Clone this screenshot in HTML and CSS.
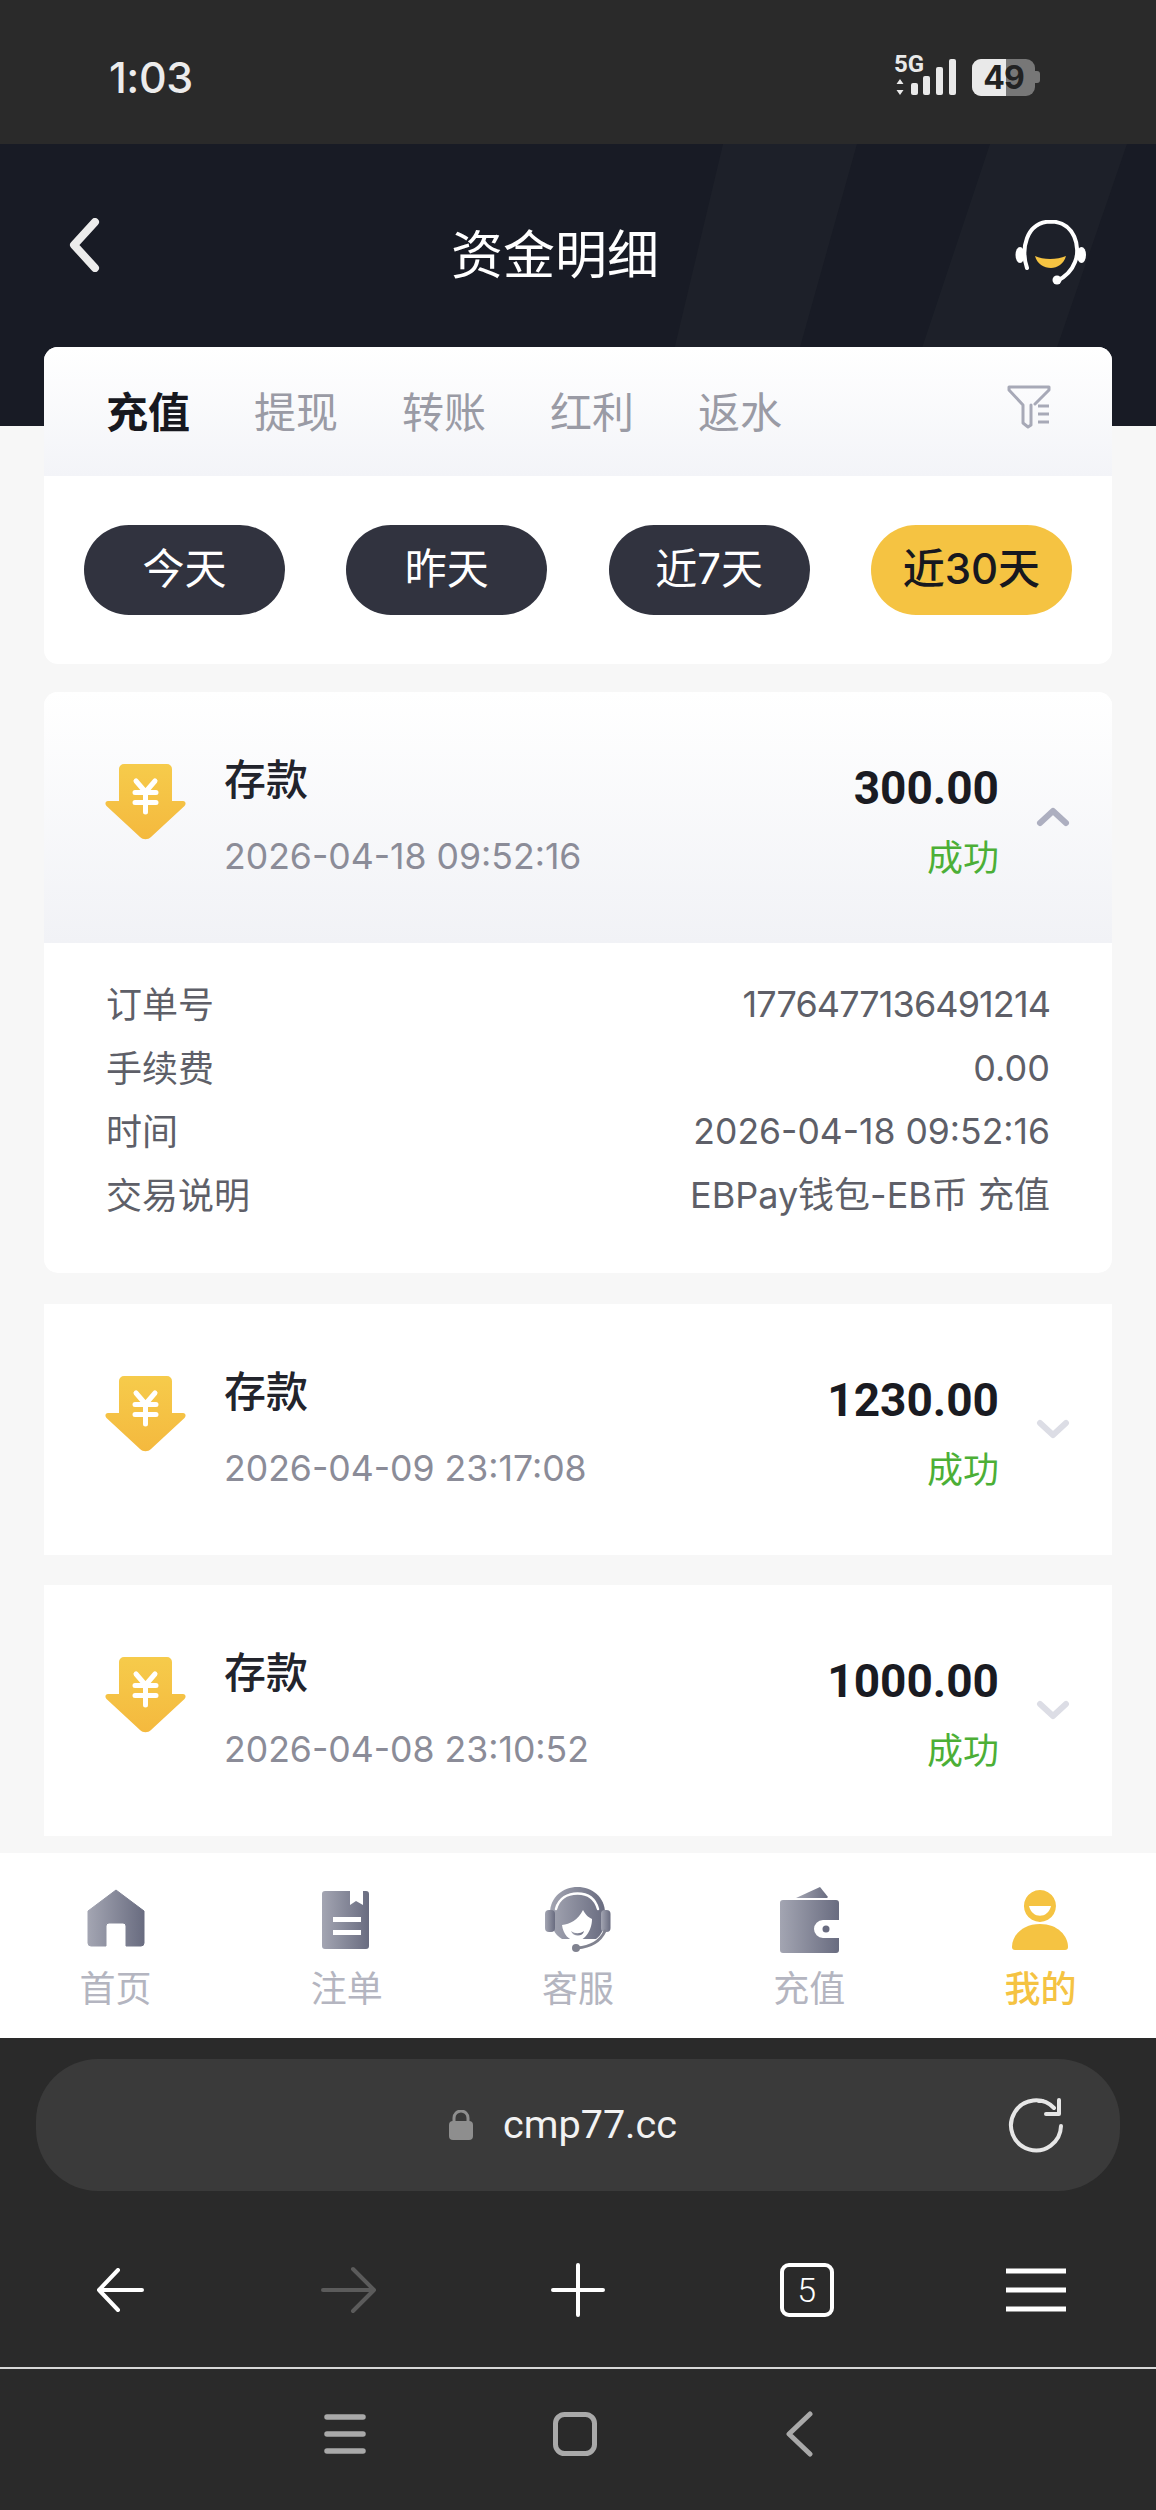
FILE: index.html
```html
<!DOCTYPE html>
<html lang="zh">
<head>
<meta charset="utf-8">
<title>资金明细</title>
<link rel="stylesheet" href="styles.css">
</head>
<body>
<div class="screen">
  <svg width="0" height="0" class="defs">
    <defs>
      <linearGradient id="nav-grey" x1="0" y1="0" x2="1" y2="0">
        <stop offset="0" stop-color="#a3a5b2"/>
        <stop offset="1" stop-color="#696c80"/>
      </linearGradient>
      <linearGradient id="arrow-gold" x1="0" y1="0" x2="0" y2="1">
        <stop offset="0" stop-color="#f6cb4b"/>
        <stop offset="1" stop-color="#f4b93e"/>
      </linearGradient>
      <symbol id="deposit" viewBox="0 0 81 76">
        <path d="M14 5a5 5 0 0 1 5-5h43a5 5 0 0 1 5 5v32h11c2.500 0 3.500 3 1.500 5L46 73c-3 3-8 3-11 0L1.500 42C-.5 40 .5 37 3 37h11z" fill="url(#arrow-gold)"/>
        <path d="M31 17l9.500 11L50 17M30 28.500h21M30 38.500h21M40.500 28v20" fill="none" stroke="#fff" stroke-width="5" stroke-linecap="round" stroke-linejoin="round"/>
      </symbol>
    </defs>
  </svg>

  <div class="status">
    <span class="clock">1:03</span>
    <div class="status-right">
      <svg class="signal" width="64" height="38" viewBox="0 0 64 38">
        <text x="0" y="14" class="fiveg">5G</text>
        <path d="M6 21l3.500 5h-7zM6 37l3.500-5h-7z" fill="#e9e9e9"/>
        <rect x="17" y="25" width="7" height="12" rx="2" fill="#e9e9e9"/>
        <rect x="29" y="18" width="7" height="19" rx="2" fill="#e9e9e9"/>
        <rect x="42" y="9" width="7" height="28" rx="2" fill="#e9e9e9"/>
        <rect x="55" y="1" width="7" height="36" rx="2" fill="#e9e9e9"/>
      </svg>
      <div class="battery"><div class="battery-fill"></div><span class="battery-num">49</span><div class="battery-nub"></div></div>
    </div>
  </div>

  <header class="header">
    <svg class="streaks" width="1156" height="282" viewBox="0 0 1156 282">
      <path d="M723 0h134L778 282H656zM990 0h137l-97 282H896z" fill="#1d2029"/>
    </svg>
    <svg class="back" width="34" height="54" viewBox="0 0 34 54"><path d="M28 4L7 27l21 23" fill="none" stroke="#ececec" stroke-width="8" stroke-linecap="round" stroke-linejoin="round"/></svg>
    <h1 class="title">资金明细</h1>
    <svg class="support" width="72" height="66" viewBox="0 0 72 66">
      <path d="M12 48C6 30 10 2 36 1.500 60 2 66 28 60 42 57 50 50 57 42 61" fill="none" stroke="#fff" stroke-width="4" stroke-linecap="round"/>
      <ellipse cx="5" cy="35" rx="4.500" ry="8" fill="#fff"/>
      <ellipse cx="66.500" cy="35" rx="4.500" ry="8" fill="#fff"/>
      <circle cx="42" cy="60" r="4.500" fill="#fff"/>
      <path d="M20 36c8 4 22 4 31 0-2 8-9 12-15 12-7 0-14-4-16-12z" fill="#f5c342"/>
    </svg>
  </header>

  <main class="content">
    <section class="filter-card">
      <div class="tabs">
        <span class="tab tab-on">充值</span>
        <span class="tab">提现</span>
        <span class="tab">转账</span>
        <span class="tab">红利</span>
        <span class="tab">返水</span>
        <svg class="filter-icon" width="46" height="44" viewBox="0 0 46 44">
          <path d="M3 2h40v3L29 19M3 2v3l14 15v18l5 4 3-2V20" fill="none" stroke="#a7a9b7" stroke-width="3" stroke-linejoin="round" stroke-linecap="round"/>
          <path d="M32 21h11M32 29h11M32 37h11" stroke="#a7a9b7" stroke-width="3"/>
        </svg>
      </div>
      <div class="pills">
        <span class="pill">今天</span>
        <span class="pill">昨天</span>
        <span class="pill">近7天</span>
        <span class="pill pill-on">近30天</span>
      </div>
    </section>

    <section class="record record-open">
      <div class="record-head">
        <svg class="arrow" width="81" height="76"><use href="#deposit"/></svg>
        <div class="record-main">
          <div class="record-title">存款</div>
          <div class="record-date">2026-04-18 09:52:16</div>
        </div>
        <div class="record-side">
          <div class="record-amount">300.00</div>
          <div class="record-state">成功</div>
        </div>
        <svg class="chev" width="34" height="20" viewBox="0 0 34 20"><path d="M4 16L17 4l13 12" fill="none" stroke="#adafc0" stroke-width="6" stroke-linecap="round" stroke-linejoin="round"/></svg>
      </div>
      <div class="details">
        <div class="detail"><span>订单号</span><span class="detail-value detail-id">1776477136491214</span></div>
        <div class="detail"><span>手续费</span><span class="detail-value">0.00</span></div>
        <div class="detail"><span>时间</span><span class="detail-value detail-time">2026-04-18 09:52:16</span></div>
        <div class="detail"><span>交易说明</span><span class="detail-value">EBPay钱包-EB币 充值</span></div>
      </div>
    </section>

    <section class="record">
      <div class="record-head">
        <svg class="arrow" width="81" height="76"><use href="#deposit"/></svg>
        <div class="record-main">
          <div class="record-title">存款</div>
          <div class="record-date">2026-04-09 23:17:08</div>
        </div>
        <div class="record-side">
          <div class="record-amount">1230.00</div>
          <div class="record-state">成功</div>
        </div>
        <svg class="chev" width="34" height="20" viewBox="0 0 34 20"><path d="M4 4l13 12L30 4" fill="none" stroke="#dcdde5" stroke-width="6" stroke-linecap="round" stroke-linejoin="round"/></svg>
      </div>
    </section>

    <section class="record">
      <div class="record-head">
        <svg class="arrow" width="81" height="76"><use href="#deposit"/></svg>
        <div class="record-main">
          <div class="record-title">存款</div>
          <div class="record-date">2026-04-08 23:10:52</div>
        </div>
        <div class="record-side">
          <div class="record-amount">1000.00</div>
          <div class="record-state">成功</div>
        </div>
        <svg class="chev" width="34" height="20" viewBox="0 0 34 20"><path d="M4 4l13 12L30 4" fill="none" stroke="#dcdde5" stroke-width="6" stroke-linecap="round" stroke-linejoin="round"/></svg>
      </div>
    </section>
  </main>

  <nav class="tabbar">
    <div class="nav-item">
      <svg class="nav-icon" width="66" height="66" viewBox="0 0 66 66">
        <path d="M33 3L61 24v32a3 3 0 0 1-3 3H43V39a3 3 0 0 0-3-3H26a3 3 0 0 0-3 3v20H8a3 3 0 0 1-3-3V24z" fill="url(#nav-grey)" stroke="url(#nav-grey)" stroke-width="1" stroke-linejoin="round"/>
      </svg>
      <span>首页</span>
    </div>
    <div class="nav-item">
      <svg class="nav-icon" width="66" height="66" viewBox="0 0 66 66">
        <path fill-rule="evenodd" d="M11 4h25v14l6-4 7 4V4h3a3 3 0 0 1 3 3v52a3 3 0 0 1-3 3H11a3 3 0 0 1-3-3V7a3 3 0 0 1 3-3zM19 30v5h28v-5zM19 43v5h28v-5z" fill="url(#nav-grey)"/>
      </svg>
      <span>注单</span>
    </div>
    <div class="nav-item">
      <svg class="nav-icon" width="66" height="66" viewBox="0 0 66 66">
        <path d="M5 26C5 10 18 0 32.500 0S60 10 60 26c0 14-3 22-9 26H17C10 48 5 40 5 26z" fill="url(#nav-grey)"/>
        <rect x="0" y="23" width="10" height="22" rx="4" fill="url(#nav-grey)"/>
        <rect x="56" y="23" width="9.500" height="22" rx="4" fill="url(#nav-grey)"/>
        <path d="M11 22C14 11 23 6.500 32.500 6.500S50 11 53 22" fill="none" stroke="#fff" stroke-width="2.500" stroke-linecap="round"/>
        <path d="M17 38c8-1 16-5 21-15 3 6 7 8 9 9 0 12-8 22-15 22-8 0-14-7-15-16z" fill="#fff"/>
        <path d="M26 44c4 3 9 3 13 0-1 6-11 6-13 0z" fill="url(#nav-grey)"/>
        <path d="M10 47l6 8h40l8-10v21H0V47z" fill="#fff"/>
        <path d="M60 44C55 55 44 60 32 61" fill="none" stroke="#80828f" stroke-width="3" stroke-linecap="round"/>
        <circle cx="31" cy="61" r="4" fill="#80828f"/>
      </svg>
      <span>客服</span>
    </div>
    <div class="nav-item">
      <svg class="nav-icon" width="66" height="66" viewBox="0 0 66 66">
        <path d="M20 11L44 0l8 10-1 1z" fill="url(#nav-grey)"/>
        <path fill-rule="evenodd" d="M4 16a3 3 0 0 1 3-3h53a3 3 0 0 1 3 3v17H47a9 9 0 0 0 0 18h16v12a3 3 0 0 1-3 3H7a3 3 0 0 1-3-3z" fill="url(#nav-grey)"/>
        <circle cx="50" cy="42" r="3.500" fill="#696c80"/>
      </svg>
      <span>充值</span>
    </div>
    <div class="nav-item nav-on">
      <svg class="nav-icon" width="66" height="66" viewBox="0 0 66 66">
        <path fill-rule="evenodd" d="M33 3a16 16 0 1 1-.1 0zM22 19c3 13 19 13 22 0z" fill="#f5c342"/>
        <path d="M33 37c18 0 28 12 28 23 0 2-1 3-3 3H8c-2 0-3-1-3-3 0-11 10-23 28-23z" fill="#f5c342"/>
      </svg>
      <span>我的</span>
    </div>
  </nav>

  <div class="browser">
    <div class="urlbar">
      <svg class="lock" width="24" height="30" viewBox="0 0 24 30">
        <path d="M5 13V8a7 7 0 0 1 14 0v5" fill="none" stroke="#8e8e8e" stroke-width="3"/>
        <rect x="0" y="11" width="24" height="19" rx="4" fill="#8e8e8e"/>
      </svg>
      <span class="url">cmp77.cc</span>
      <svg class="reload" width="56" height="56" viewBox="0 0 56 56">
        <path d="M46 10A25 25 0 1 0 53 28" fill="none" stroke="#e6e6e6" stroke-width="4" stroke-linecap="round"/>
        <path d="M31 3h3.500M51 2v14H38" fill="none" stroke="#e6e6e6" stroke-width="4" stroke-linecap="round" stroke-linejoin="round"/>
      </svg>
    </div>
    <div class="toolbar">
      <svg width="48" height="44" viewBox="0 0 48 44"><path d="M46 22H3M22 2L3 22l19 20" fill="none" stroke="#fff" stroke-width="4" stroke-linecap="round" stroke-linejoin="round"/></svg>
      <svg width="56" height="48" viewBox="0 0 56 48"><path d="M2 24h51M32 3l21 21-21 21" fill="none" stroke="#5b5b5b" stroke-width="4" stroke-linecap="round" stroke-linejoin="round"/></svg>
      <svg width="54" height="54" viewBox="0 0 54 54"><path d="M27 2v50M2 27h50" fill="none" stroke="#fff" stroke-width="4" stroke-linecap="round"/></svg>
      <div class="tab-count">5</div>
      <svg width="62" height="46" viewBox="0 0 62 46"><path d="M1 4h60M1 23h60M1 42h60" stroke="#fff" stroke-width="5"/></svg>
    </div>
    <div class="sys-nav">
      <svg width="42" height="42" viewBox="0 0 42 42"><path d="M3 4h36M3 21h36M3 38h36" stroke="#a9a9a9" stroke-width="5.500" stroke-linecap="round"/></svg>
      <svg width="44" height="44" viewBox="0 0 44 44"><rect x="2.500" y="2.500" width="39" height="39" rx="9" fill="none" stroke="#a9a9a9" stroke-width="5"/></svg>
      <svg width="30" height="46" viewBox="0 0 30 46"><path d="M26 3L5 23l21 20" fill="none" stroke="#a9a9a9" stroke-width="5" stroke-linecap="round" stroke-linejoin="round"/></svg>
    </div>
  </div>
</div>
</body>
</html>
```
FILE: styles.css
```css
* { box-sizing: border-box; }
html, body { margin: 0; padding: 0; }
body { background: #f7f7f7; font-family: "Noto Sans CJK SC", "Noto Sans", sans-serif; }
.screen { width: 1156px; height: 2510px; display: flex; flex-direction: column; overflow: hidden; position: relative; }
.defs { position: absolute; }

.status { flex: none; height: 144px; background: #2a2a2a; display: flex; align-items: center; justify-content: space-between; padding: 0 121px 0 109px; }
.clock { font: 500 43px/1 Inter, Roboto, sans-serif; color: #ececec; letter-spacing: -0.500px; margin-top: 10px; }
.status-right { display: flex; align-items: flex-start; gap: 14px; align-self: flex-start; margin-top: 58px; }
.signal { display: block; overflow: visible; }
.fiveg { font: 700 24px Roboto, sans-serif; fill: #e9e9e9; }
.battery { position: relative; width: 63px; height: 37px; margin-top: 1px; background: #777; border-radius: 9px; display: flex; align-items: center; justify-content: center; }
.battery-fill { position: absolute; left: 0; top: 0; bottom: 0; width: 34px; background: #e9e9e9; border-radius: 9px 0 0 9px; }
.battery-num { position: relative; font: 700 32px/1 Inter, Roboto, sans-serif; color: #222; letter-spacing: -1px; }
.battery-nub { position: absolute; right: -5px; top: 12px; width: 5px; height: 12px; background: #777; border-radius: 0 3px 3px 0; }

.header { flex: none; position: relative; height: 282px; background: #181b25; display: flex; align-items: flex-start; padding: 76px 69px 0 67px; color: #fff; }
.streaks { position: absolute; left: 0; top: 0; }
.back, .support, .title { position: relative; }
.back { flex: none; margin-top: -2px; }
.title { margin: 0 0 0 350px; font-size: 52px; font-weight: 400; line-height: 64px; color: #fff; }
.support { flex: none; margin-left: auto; }

.content { flex: 1; min-height: 0; position: relative; margin-top: -79px; padding: 0 44px; display: flex; flex-direction: column; overflow: hidden; }
.filter-card { flex: none; background: #fff; border-radius: 14px; overflow: hidden; margin-bottom: 28px; }
.tabs { height: 129px; background: linear-gradient(#fff, #f3f4f8); display: flex; align-items: center; gap: 64px; padding: 0 42px 0 62px; position: relative; }
.tab { font-size: 42px; line-height: 60px; color: #9a9ba5; margin-top: -4px; }
.tab-on { color: #17181f; font-weight: 700; }
.filter-icon { margin-left: auto; margin-top: -10px; margin-right: 18px; }
.pills { display: flex; gap: 61.300px; padding: 49px 40px; }
.pill { flex: none; width: 201px; height: 90px; padding-bottom: 2px; border-radius: 45px; background: #31333f; color: #fff; font: 400 42px/54px Inter, "Noto Sans CJK SC", sans-serif; display: flex; align-items: center; justify-content: center; }
.pill-on { background: #f5c342; color: #17181f; font-weight: 500; }

.record { flex: none; background: #fff; margin-bottom: 30px; }
.record-open { border-radius: 14px; overflow: hidden; margin-bottom: 31px; }
.record-head { position: relative; height: 251px; display: flex; align-items: flex-start; padding: 57px 0 0 61px; }
.record-open .record-head { background: linear-gradient(#fff, #f1f2f6); }
.arrow { flex: none; margin-top: 14.500px; }
.record-main { margin-left: 38px; }
.record-title { font-size: 42px; line-height: 56px; color: #22242c; font-weight: 500; }
.record-date { margin-top: 24px; font: 400 35.600px/56px Inter, Roboto, sans-serif; color: #8b8c98; }
.record-side { margin-left: auto; margin-right: 113px; text-align: right; padding-top: 11px; }
.record-amount { font: 700 46px/56px Roboto, sans-serif; color: #1a1b22; }
.record-state { margin-top: 11px; font-size: 36px; line-height: 56px; color: #4caf36; }
.chev { position: absolute; left: 992px; top: 115px; }

.details { height: 330px; padding: 28px 62px 0 62px; }
.detail { display: flex; justify-content: space-between; font-size: 36px; line-height: 63.600px; color: #5e5f68; }
.detail-value { font-family: Inter, "Noto Sans CJK SC", sans-serif; font-size: 36px; line-height: 59.600px; padding-top: 4px; }
.detail-id { letter-spacing: -0.900px; }
.detail-time { font-size: 35.500px; }

.tabbar { flex: none; height: 185px; background: #fff; display: grid; grid-template-columns: repeat(5, 1fr); padding-top: 34px; position: relative; }
.nav-item { display: flex; flex-direction: column; align-items: center; font-size: 36px; line-height: 48px; color: #b4b5c0; }
.nav-icon { display: block; margin-bottom: 9px; }
.nav-on { color: #f5c342; font-weight: 500; }

.browser { flex: none; height: 472px; background: #2a2a2a; display: flex; flex-direction: column; }
.urlbar { flex: none; position: relative; height: 132px; margin: 21px 36px 0; background: #3a3a3a; border-radius: 62px; display: flex; align-items: center; justify-content: center; gap: 30px; color: #f2f2f2; padding-right: 30px; }
.lock { flex: none; }
.url { font: 400 39.600px/1 Roboto, sans-serif; }
.reload { position: absolute; right: 56px; top: 39px; }
.toolbar { flex: none; height: 178px; display: grid; grid-template-columns: repeat(5, 1fr); place-items: center; padding: 21px 6px 0; border-bottom: 2px solid #d8d8d8; }
.tab-count { width: 54px; height: 54px; border: 4px solid #fff; border-radius: 9px; color: #fff; font: 300 34px/46px Roboto, sans-serif; text-align: center; }
.sys-nav { flex: none; height: 134px; display: flex; align-items: center; justify-content: center; gap: 187px; padding: 0 18px 4px 0; }
```
